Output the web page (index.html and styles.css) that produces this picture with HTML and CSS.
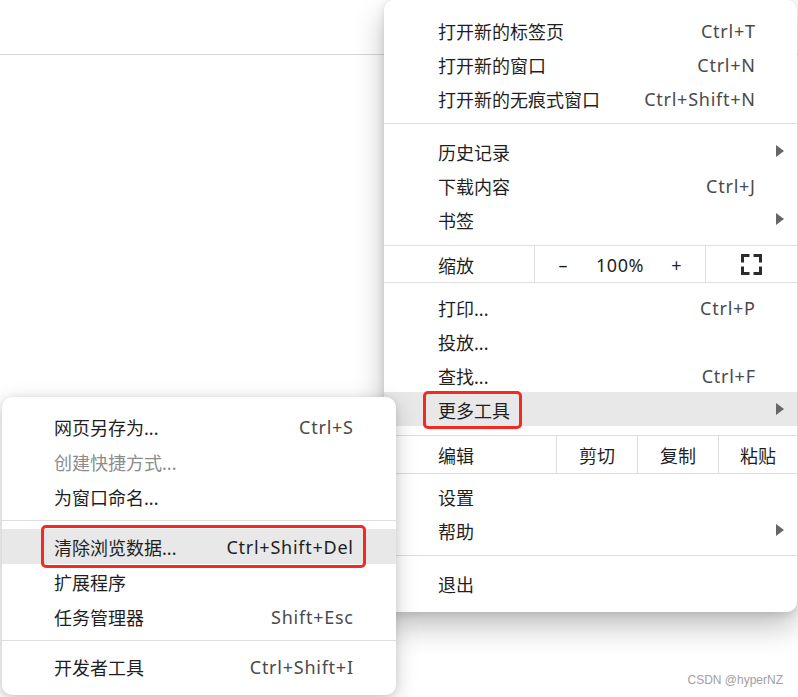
FILE: index.html
```html
<!DOCTYPE html>
<html lang="zh-CN">
<head>
<meta charset="utf-8">
<title>Chrome menu</title>
<link rel="stylesheet" href="styles.css">
</head>
<body>
<div class="page">
  <div class="toolbar"></div>

  <div class="menu main-menu">
    <div class="sec m1">
      <div class="row"><span class="label">打开新的标签页</span><span class="key">Ctrl+T</span><span class="slot"></span></div>
      <div class="row"><span class="label">打开新的窗口</span><span class="key">Ctrl+N</span><span class="slot"></span></div>
      <div class="row"><span class="label">打开新的无痕式窗口</span><span class="key">Ctrl+Shift+N</span><span class="slot"></span></div>
    </div>
    <div class="sep"></div>
    <div class="sec m2">
      <div class="row"><span class="label">历史记录</span><span class="key"></span><span class="slot"><span class="arrow"></span></span></div>
      <div class="row"><span class="label">下载内容</span><span class="key">Ctrl+J</span><span class="slot"></span></div>
      <div class="row"><span class="label">书签</span><span class="key"></span><span class="slot"><span class="arrow"></span></span></div>
    </div>
    <div class="sep"></div>
    <div class="ctl-row zoom-row">
      <span class="ctl-label zoom-label">缩放</span>
      <div class="ctl-cell zoom-cell"><span>–</span><span>100%</span><span>+</span></div>
      <div class="ctl-cell fs-cell">
        <svg class="fs-icon" width="21" height="21" viewBox="0 0 21 21" fill="none" stroke="#2b2b2b" stroke-width="3" stroke-linecap="butt" stroke-linejoin="miter">
          <path d="M1.5 8.5V1.5H8.5"/>
          <path d="M12.5 1.5H19.5V8.5"/>
          <path d="M19.5 12.5V19.5H12.5"/>
          <path d="M8.5 19.5H1.5V12.5"/>
        </svg>
      </div>
    </div>
    <div class="sep"></div>
    <div class="sec m4">
      <div class="row"><span class="label">打印...</span><span class="key">Ctrl+P</span><span class="slot"></span></div>
      <div class="row"><span class="label">投放...</span><span class="key"></span><span class="slot"></span></div>
      <div class="row"><span class="label">查找...</span><span class="key">Ctrl+F</span><span class="slot"></span></div>
      <div class="row active"><span class="label">更多工具</span><span class="key"></span><span class="slot"><span class="arrow"></span></span><span class="mark mark-main"></span></div>
    </div>
    <div class="sep"></div>
    <div class="ctl-row edit-row">
      <span class="ctl-label edit-label">编辑</span>
      <div class="ctl-cell edit-cell">剪切</div>
      <div class="ctl-cell edit-cell">复制</div>
      <div class="ctl-cell edit-cell last">粘贴</div>
    </div>
    <div class="sep"></div>
    <div class="sec m6">
      <div class="row"><span class="label">设置</span><span class="key"></span><span class="slot"></span></div>
      <div class="row"><span class="label">帮助</span><span class="key"></span><span class="slot"><span class="arrow"></span></span></div>
    </div>
    <div class="sep"></div>
    <div class="sec m7">
      <div class="row"><span class="label">退出</span><span class="key"></span><span class="slot"></span></div>
    </div>
  </div>

  <div class="menu sub-menu">
    <div class="sec s1">
      <div class="row"><span class="label">网页另存为...</span><span class="key">Ctrl+S</span><span class="slot"></span></div>
      <div class="row"><span class="label disabled">创建快捷方式...</span><span class="key"></span><span class="slot"></span></div>
      <div class="row"><span class="label">为窗口命名...</span><span class="key"></span><span class="slot"></span></div>
    </div>
    <div class="sep"></div>
    <div class="sec s2">
      <div class="row active"><span class="label">清除浏览数据...</span><span class="key strong">Ctrl+Shift+Del</span><span class="slot"></span><span class="mark mark-sub"></span></div>
      <div class="row"><span class="label">扩展程序</span><span class="key"></span><span class="slot"></span></div>
      <div class="row"><span class="label">任务管理器</span><span class="key">Shift+Esc</span><span class="slot"></span></div>
    </div>
    <div class="sep"></div>
    <div class="sec s3">
      <div class="row"><span class="label">开发者工具</span><span class="key">Ctrl+Shift+I</span><span class="slot"></span></div>
    </div>
  </div>

  <div class="watermark">CSDN @hyperNZ</div>
</div>
</body>
</html>
```

FILE: styles.css
```css
* { box-sizing: border-box; }

html, body {
  margin: 0;
  padding: 0;
  background: #ffffff;
}

body {
  font-family: "Noto Sans", "Noto Sans CJK SC", sans-serif;
  font-size: 18px;
  color: #1f1f1f;
}

.page {
  position: relative;
  width: 798px;
  height: 697px;
  overflow: hidden;
  background: #ffffff;
}

.toolbar {
  height: 55px;
  border-bottom: 1px solid #d6d6d6;
}

.menu {
  position: absolute;
  background: #ffffff;
  border-radius: 10px;
  display: flex;
  flex-direction: column;
}

.main-menu {
  left: 384px;
  top: 0;
  width: 413px;
  height: 612px;
  box-shadow: 0 14px 30px rgba(0, 0, 0, 0.25), 0 2px 8px rgba(0, 0, 0, 0.12);
  z-index: 1;
}

.sub-menu {
  left: 2px;
  top: 397px;
  width: 394px;
  height: 298px;
  box-shadow: 0 6px 22px rgba(0, 0, 0, 0.2), 0 1px 6px rgba(0, 0, 0, 0.1);
  z-index: 2;
}

.sep {
  height: 1px;
  background: #dedede;
  flex: none;
}

.row {
  position: relative;
  display: grid;
  grid-template-columns: 1fr auto 42px;
  align-items: center;
  padding: 1px 0 0 54px;
}

.main-menu .row { height: 34px; }
.sub-menu .row { height: 35px; padding-left: 52px; padding-right: 0; grid-template-columns: 1fr auto 43px; }

.row.active { background: #e8e8e8; }

.label { white-space: nowrap; }
.label.disabled { color: #8c8c8c; }

.key {
  color: #4a4a4a;
  white-space: nowrap;
  text-align: right;
  letter-spacing: 0.75px;
  margin-right: -0.75px;
}
.key.strong { color: #1f1f1f; }

.slot {
  position: relative;
  height: 100%;
  display: flex;
  align-items: center;
}

.arrow {
  margin-left: 21px;
  margin-top: -2px;
  width: 0;
  height: 0;
  border-top: 6px solid transparent;
  border-bottom: 6px solid transparent;
  border-left: 8px solid #666666;
}

.m1 { padding: 13px 0 8px; }
.m2 { padding: 10px 0 9px; }
.m4 { padding: 7px 0 9px; }
.m6 { padding: 5px 0 8px; }
.m7 { padding: 10px 0 12px; }

.s1 { padding: 12px 0 6px; }
.s2 { padding: 8px 0 6px; }
.s3 { padding: 8px 0 11px; }

.ctl-row {
  display: flex;
  align-items: stretch;
}
.zoom-row { height: 36px; }
.edit-row { height: 37px; }

.ctl-label {
  display: flex;
  align-items: center;
  padding: 1px 0 0 54px;
  flex: none;
}
.zoom-label { width: 150px; }
.edit-label { width: 172px; }

.ctl-cell {
  border-left: 1px solid #dedede;
  display: flex;
  align-items: center;
  justify-content: center;
  padding-top: 1px;
}

.zoom-cell {
  width: 171px;
  display: grid;
  grid-template-columns: 1fr 1fr 1fr;
  justify-items: center;
  letter-spacing: 0.5px;
}

.fs-cell { flex: 1; padding-top: 0; }
.fs-icon { display: block; }

.edit-cell { width: 81px; }
.edit-cell.last { flex: 1; width: auto; }

.mark {
  position: absolute;
  border: 3px solid #f42a22;
  border-radius: 5px;
  pointer-events: none;
}
.mark-main { left: 39px; top: -1px; width: 99px; height: 38px; }
.mark-sub { left: 39px; top: -4px; width: 325px; height: 43px; }

.watermark {
  position: absolute;
  right: 15px;
  top: 673px;
  font-family: "Liberation Sans", Arial, sans-serif;
  font-size: 12px;
  color: #a0a0a0;
  z-index: 3;
}
```
